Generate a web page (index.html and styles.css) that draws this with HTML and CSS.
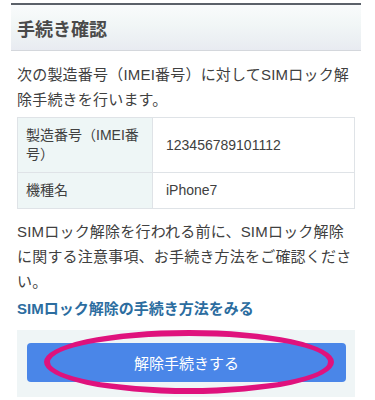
FILE: index.html
```html
<!DOCTYPE html>
<html lang="ja">
<head>
    <meta charset="UTF-8">
    <meta name="viewport" content="width=device-width, initial-scale=1.0">
    <title>手続き確認</title>
    <link rel="stylesheet" href="styles.css">
</head>
<body>

    <div class="page">
        <h1 class="page-title">手続き確認</h1>

        <div class="content">
            <p class="lead">次の製造番号（IMEI番号）に対してSIMロック解除手続きを行います。</p>

            <table class="info-table">
                <tr>
                    <th>製造番号（IMEI番号）</th>
                    <td>123456789101112</td>
                </tr>
                <tr>
                    <th>機種名</th>
                    <td>iPhone7</td>
                </tr>
            </table>

            <p class="note">SIMロック解除を行われる前に、SIMロック解除に関する注意事項、お手続き方法をご確認ください。</p>

            <a class="guide-link" href="#">SIMロック解除の手続き方法をみる</a>

            <div class="action-box">
                <button class="submit-btn">解除手続きする</button>
                <!-- highlight mark drawn over the button -->
                <div class="highlight-ring"></div>
            </div>
        </div>
    </div>

</body>
</html>
```

FILE: styles.css
```css
body {
    font-family: "Liberation Sans", "Noto Sans CJK JP", sans-serif;
    background-color: #fff;
    color: #404040;
    margin: 0;
}

.page {
    margin: 3px 14px 0 11px;
}

.page-title {
    margin: 0;
    height: 45px;
    padding-left: 6px;
    display: flex;
    align-items: center;
    font-size: 18px;
    font-weight: bold;
    color: #4a4a4a;
    border-top: 2px solid #5b6169;
    border-bottom: 1px solid #d4d7dc;
    background: linear-gradient(#f9fbfc, #f1f6f6 45%, #e8ebf1);
}

.content {
    padding: 0 6px;
}

.lead {
    margin: 11px 0 5px;
    font-size: 15px;
    line-height: 25px;
    letter-spacing: 0.2px;
}

.info-table {
    width: 100%;
    border-collapse: collapse;
    font-size: 14px;
    line-height: 19px;
}

.info-table th,
.info-table td {
    border: 1px solid #dfe3e7;
    padding: 8px 8px;
    text-align: left;
    font-weight: normal;
}

.info-table th {
    width: 118px;
    background-color: #eef6f6;
}

.info-table td {
    padding-left: 13px;
}

.note {
    margin: 10px 0 2px;
    font-size: 15px;
    line-height: 25px;
    letter-spacing: 0.2px;
}

.guide-link {
    display: block;
    font-size: 15px;
    line-height: 25px;
    font-weight: bold;
    color: #2c6d9f;
    text-decoration: none;
}

.action-box {
    position: relative;
    margin-top: 9px;
    padding: 13px 9px 15px 10px;
    background-color: #eff5f6;
}

.submit-btn {
    display: block;
    width: 100%;
    height: 39px;
    font-family: inherit;
    font-size: 15px;
    color: #fff;
    background-color: #4a86e8;
    border: none;
    border-radius: 4px;
}

.highlight-ring {
    position: absolute;
    left: 27px;
    top: 0;
    width: 290px;
    height: 64px;
    box-sizing: border-box;
    border: 6px solid #df127d;
    border-radius: 50%;
    pointer-events: none;
}
```
